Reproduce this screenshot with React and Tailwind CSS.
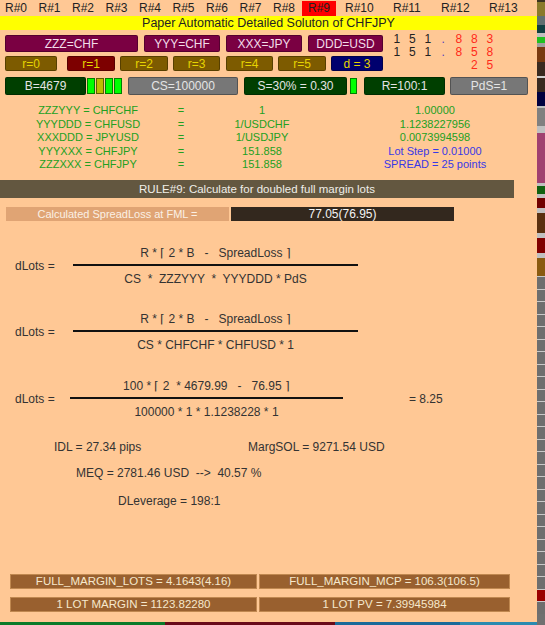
const Btn = ({ w, bg, fg, children, className = '' }) => (
  <div
    className={`flex items-center justify-center rounded-[2px] border border-black/30 ${className}`}
    style={{ width: w, background: bg, color: fg }}
  >
    {children}
  </div>
);

const Frac = ({ num, den, w }) => (
  <div className="flex flex-col items-center" style={{ width: w }}>
    <div className="h-[13px] leading-[13px] whitespace-pre">{num}</div>
    <div className="mt-[4px] h-[2px] w-full bg-[#111]" />
    <div className="mt-[7px] h-[13px] leading-[13px] whitespace-pre">{den}</div>
  </div>
);

const tableRows = [
  ['ZZZYYY = CHFCHF', '1', '1.00000', 'g'],
  ['YYYDDD = CHFUSD', '1/USDCHF', '1.1238227956', 'g'],
  ['XXXDDD = JPYUSD', '1/USDJPY', '0.0073994598', 'g'],
  ['YYYXXX = CHFJPY', '151.858', 'Lot Step = 0.01000', 'b'],
  ['ZZZXXX = CHFJPY', '151.858', 'SPREAD = 25 points', 'b'],
];

const strip = [
  ['#3a3320', 2], ['#8a7a2a', 14], ['#607070', 9], ['#104040', 8], ['#c0c0c0', 4], ['#20c020', 6],
  ['#a0a0a0', 4], ['#7a3a10', 15], ['#3a2a20', 14], ['#d0d0d0', 2], ['#3a2a20', 14], ['#000040', 14],
  ['#c0c0c0', 2], ['#808080', 18], ['#c0c0c0', 7], ['#a04070', 50], ['#c0c0c0', 3], ['#106010', 8],
  ['#c0c0c0', 4], ['#700000', 10], ['#c0c0c0', 5], ['#5a3010', 20], ['#c0c0c0', 5], ['#800000', 15],
  ['#c0c0c0', 5], ['#8a5a10', 18],
];

export default function App() {
  const grays = Array.from({ length: 27 });
  return (
    <div className="flex h-[625px] w-[545px] overflow-hidden bg-[#FFC895] font-['Liberation_Sans',Arial,sans-serif] text-[12px] text-[#333]">
      <div className="flex w-[537px] flex-col">
        {/* rule tabs */}
        <div className="flex h-[16px] items-center pl-[5px] text-[#222]">
          {['R#0', 'R#1', 'R#2', 'R#3', 'R#4', 'R#5', 'R#6', 'R#7'].map((r) => (
            <div key={r} className="w-[33.5px]">{r}</div>
          ))}
          <div className="w-[29px]">R#8</div>
          <div className="flex h-[15px] w-[34px] items-center justify-center bg-[#FF0000]">R#9</div>
          {['R#10', 'R#11', 'R#12', 'R#13'].map((r) => (
            <div key={r} className="w-[48px] pl-[9px]">{r}</div>
          ))}
        </div>
        <div className="h-[14px] bg-[#FFFF00] text-center text-[12.5px] leading-[14px] text-[#222]">
          Paper Automatic Detailed Soluton of CHFJPY
        </div>

        {/* buttons + digits */}
        <div className="flex">
          <div className="flex flex-col pl-[5px]">
            <div className="mt-[5px] flex h-[17px] gap-[6px] text-[#F3DCE8]">
              <Btn w={133} bg="#7A0042">ZZZ=CHF</Btn>
              <Btn w={76} bg="#7A0042">YYY=CHF</Btn>
              <Btn w={76} bg="#7A0042">XXX=JPY</Btn>
              <Btn w={75} bg="#7A0042">DDD=USD</Btn>
            </div>
            <div className="mt-[4px] flex h-[15px]">
              <Btn w={52} bg="#7D5B00" fg="#E6D400">r=0</Btn>
              <Btn w={48} bg="#7D0000" fg="#E6D400" className="ml-[10px]">r=1</Btn>
              <Btn w={48} bg="#7D5B00" fg="#E6D400" className="ml-[5px]">r=2</Btn>
              <Btn w={47} bg="#7D5B00" fg="#E6D400" className="ml-[5px]">r=3</Btn>
              <Btn w={47} bg="#7D5B00" fg="#E6D400" className="ml-[6px]">r=4</Btn>
              <Btn w={48} bg="#7D5B00" fg="#E6D400" className="ml-[5px]">r=5</Btn>
              <Btn w={52} bg="#00006E" fg="#E6D400" className="ml-[5px]">d = 3</Btn>
            </div>
          </div>
          <div className="ml-[6px] mt-[3px] flex flex-col text-[12px] leading-[13px]">
            {[
              ['1', '5', '1', '.', '8', '8', '3'],
              ['1', '5', '1', '.', '8', '5', '8'],
              ['', '', '', '', '', '2', '5'],
            ].map((row, i) => (
              <div key={i} className="flex h-[13px]">
                {row.map((c, j) => (
                  <div
                    key={j}
                    className={`w-[15.5px] text-center ${j < 3 ? 'text-[#222]' : j === 3 ? 'text-[#5040C0]' : 'text-[#FF2A1A]'}`}
                  >
                    {c}
                  </div>
                ))}
              </div>
            ))}
          </div>
        </div>

        <div className="mt-[5px] flex h-[18px] items-stretch pl-[5px] text-[#E4E4E4]">
          <Btn w={81} bg="#003F00">B=4679</Btn>
          <div className="ml-[1px] flex gap-[1px] py-[1px]">
            <div className="w-[8px] border border-black/50 bg-[#00FF00]" />
            <div className="w-[8px] border border-black/50 bg-[#BDBD00]" />
            <div className="w-[8px] border border-black/50 bg-[#00FF00]" />
            <div className="w-[8px] border border-black/50 bg-[#00FF00]" />
          </div>
          <Btn w={110} bg="#777777" className="ml-[6px]">CS=100000</Btn>
          <Btn w={103} bg="#003F00" className="ml-[6px]">S=30% = 0.30</Btn>
          <div className="my-[1px] ml-[3px] w-[7px] border border-black/50 bg-[#00FF00]" />
          <Btn w={81} bg="#003F00" className="ml-[7px]">R=100:1</Btn>
          <Btn w={78} bg="#777777" className="ml-[5px]">PdS=1</Btn>
        </div>

        {/* currency table */}
        <div className="mt-[9px] flex flex-col text-[11px] leading-[13.5px]">
          {tableRows.map(([a, b, c, k]) => (
            <div key={a} className="flex text-[#22A022]">
              <div className="w-[176px] text-center">{a}</div>
              <div className="w-[10px] text-center">=</div>
              <div className="w-[152px] text-center">{b}</div>
              <div className={`w-[194px] text-center ${k === 'b' ? 'text-[#3838E6]' : ''}`}>{c}</div>
            </div>
          ))}
        </div>

        <div className="mt-[8px] h-[18px] w-[514px] bg-[#635740] text-center text-[11.5px] leading-[18px] text-[#F0EEE8]">
          RULE#9: Calculate for doubled full margin lots
        </div>

        <div className="mt-[9px] flex h-[14px] text-[11px] leading-[14px]">
          <div className="ml-[6px] w-[223px] bg-[#E0A474] text-center text-[#FBF0E4]">Calculated SpreadLoss at FML =</div>
          <div className="ml-[2px] w-[223px] bg-[#33281E] text-center text-[12px] text-[#F4F4F4]">77.05(76.95)</div>
        </div>

        {/* formulas */}
        <div className="mt-[26px] flex items-center">
          <div className="ml-[15px] w-[58px]">dLots =</div>
          <Frac w={285} num="R * ⌈ 2 * B   -   SpreadLoss ⌉" den="CS  *  ZZZYYY  *  YYYDDD * PdS" />
        </div>
        <div className="mt-[27px] flex items-center">
          <div className="ml-[15px] w-[58px]">dLots =</div>
          <Frac w={285} num="R * ⌈ 2 * B   -   SpreadLoss ⌉" den="CS * CHFCHF * CHFUSD * 1" />
        </div>
        <div className="mt-[28px] flex items-center">
          <div className="ml-[15px] w-[55px]">dLots =</div>
          <Frac w={273} num="100 * ⌈ 2  * 4679.99   -   76.95 ⌉" den="100000 * 1 * 1.1238228 * 1" />
          <div className="ml-[66px]">= 8.25</div>
        </div>

        <div className="mt-[22px] flex h-[13px] leading-[13px]">
          <div className="ml-[54px] w-[194px]">IDL = 27.34 pips</div>
          <div>MargSOL = 9271.54 USD</div>
        </div>
        <div className="ml-[76px] mt-[13px] h-[13px] whitespace-pre leading-[13px]">MEQ = 2781.46 USD  -->  40.57 %</div>
        <div className="ml-[118px] mt-[15px] h-[13px] leading-[13px]">DLeverage = 198:1</div>

        <div className="ml-[10px] mt-[66px] flex flex-col gap-[8px] text-[11.5px] text-[#F6E8CC]">
          {[
            ['FULL_MARGIN_LOTS = 4.1643(4.16)', 'FULL_MARGIN_MCP = 106.3(106.5)'],
            ['1 LOT MARGIN = 1123.82280', '1 LOT PV = 7.39945984'],
          ].map(([l, r]) => (
            <div key={l} className="flex h-[15px] gap-[2px] leading-[15px]">
              <div className="w-[247px] border border-[#C08850] bg-[#99602F] text-center leading-[13px]">{l}</div>
              <div className="w-[251px] border border-[#C08850] bg-[#99602F] text-center leading-[13px]">{r}</div>
            </div>
          ))}
        </div>
        <div className="mt-auto flex h-[3px]">
          <div className="w-[165px] bg-[#0A7A2A]" />
          <div className="w-[170px] bg-[#6A0A1A]" />
          <div className="w-[125px] bg-[#1A6A9A]" />
          <div className="flex-1 bg-[#2A8AB0]" />
        </div>
      </div>

      {/* side strip of the chart behind */}
      <div className="flex w-[8px] flex-col bg-[#707070]">
        {strip.map(([c, h], i) => (
          <div key={i} style={{ background: c, height: h }} />
        ))}
        {grays.map((_, i) => (
          <div
            key={'g' + i}
            className={`h-[12.5px] border-t border-[#c8c8c8] ${i === 25 ? 'bg-[#9a0000]' : 'bg-[#6e6e6e]'}`}
          />
        ))}
      </div>
    </div>
  );
}
